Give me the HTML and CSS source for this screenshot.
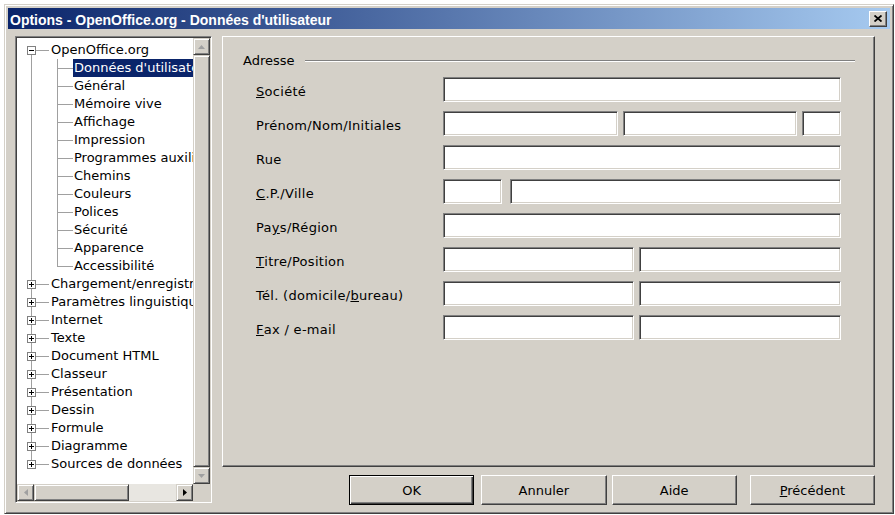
FILE: index.html
```html
<!DOCTYPE html>
<html>
<head>
<meta http-equiv="Content-Type" content="text/html;charset=utf-8">
<title>Options - OpenOffice.org - Données d'utilisateur</title>
<link rel="stylesheet" href="styles.css">
</head>
<body>
<div class="window">
  <div class="titlebar">
    <span class="caption">Options - OpenOffice.org - Données d'utilisateur</span>
    <span class="close"><svg width="8" height="7" viewBox="0 0 8 7"><path d="M0.5 0.5 L7.5 6.5 M7.5 0.5 L0.5 6.5" stroke="#000" stroke-width="1.8"/></svg></span>
  </div>

  <div class="client">
    <div class="tree">
      <div class="viewport">
        <div class="node root"><span class="gutter"><span class="box minus"></span></span><span class="label">OpenOffice.org</span></div>
        <div class="node child"><span class="gutter"></span><span class="label selected">Données d'utilisateur</span></div>
        <div class="node child"><span class="gutter"></span><span class="label">Général</span></div>
        <div class="node child"><span class="gutter"></span><span class="label">Mémoire vive</span></div>
        <div class="node child"><span class="gutter"></span><span class="label">Affichage</span></div>
        <div class="node child"><span class="gutter"></span><span class="label">Impression</span></div>
        <div class="node child"><span class="gutter"></span><span class="label">Programmes auxiliaires</span></div>
        <div class="node child"><span class="gutter"></span><span class="label">Chemins</span></div>
        <div class="node child"><span class="gutter"></span><span class="label">Couleurs</span></div>
        <div class="node child"><span class="gutter"></span><span class="label">Polices</span></div>
        <div class="node child"><span class="gutter"></span><span class="label">Sécurité</span></div>
        <div class="node child"><span class="gutter"></span><span class="label">Apparence</span></div>
        <div class="node child last"><span class="gutter"></span><span class="label">Accessibilité</span></div>
        <div class="node top"><span class="gutter"><span class="box plus"></span></span><span class="label">Chargement/enregistrement</span></div>
        <div class="node top"><span class="gutter"><span class="box plus"></span></span><span class="label">Paramètres linguistiques</span></div>
        <div class="node top"><span class="gutter"><span class="box plus"></span></span><span class="label">Internet</span></div>
        <div class="node top"><span class="gutter"><span class="box plus"></span></span><span class="label">Texte</span></div>
        <div class="node top"><span class="gutter"><span class="box plus"></span></span><span class="label">Document HTML</span></div>
        <div class="node top"><span class="gutter"><span class="box plus"></span></span><span class="label">Classeur</span></div>
        <div class="node top"><span class="gutter"><span class="box plus"></span></span><span class="label">Présentation</span></div>
        <div class="node top"><span class="gutter"><span class="box plus"></span></span><span class="label">Dessin</span></div>
        <div class="node top"><span class="gutter"><span class="box plus"></span></span><span class="label">Formule</span></div>
        <div class="node top"><span class="gutter"><span class="box plus"></span></span><span class="label">Diagramme</span></div>
        <div class="node top last"><span class="gutter"><span class="box plus"></span></span><span class="label">Sources de données</span></div>
      </div>

      <div class="vscroll">
        <span class="sbtn"><svg width="7" height="4" viewBox="0 0 7 4"><polygon points="3.5,0 7,4 0,4" fill="#a0a0a0"/></svg></span>
        <span class="thumb"></span>
        <span class="sbtn"><svg width="7" height="4" viewBox="0 0 7 4"><polygon points="0,0 7,0 3.5,4" fill="#a0a0a0"/></svg></span>
      </div>
      <div class="hscroll">
        <span class="sbtn"><svg width="4" height="7" viewBox="0 0 4 7"><polygon points="4,0 4,7 0,3.5" fill="#a0a0a0"/></svg></span>
        <span class="thumb hthumb"></span>
        <span class="track"></span>
        <span class="sbtn"><svg width="4" height="7" viewBox="0 0 4 7"><polygon points="0,0 4,3.5 0,7" fill="#000"/></svg></span>
      </div>
      <div class="corner"></div>
    </div>

    <div class="page">
      <div class="group-head"><span>Adresse</span><span class="rule"></span></div>
      <div class="form">
        <label><u>S</u>ociété</label>
        <div class="fields"><span class="field"></span></div>

        <label>Prénom/Nom/Initiales</label>
        <div class="fields"><span class="field w175"></span><span class="field w174"></span><span class="field"></span></div>

        <label>Rue</label>
        <div class="fields"><span class="field"></span></div>

        <label><u>C</u>.P./Ville</label>
        <div class="fields wide-gap"><span class="field w59"></span><span class="field"></span></div>

        <label>Pa<u>y</u>s/Région</label>
        <div class="fields"><span class="field"></span></div>

        <label><u>T</u>itre/Position</label>
        <div class="fields"><span class="field w191"></span><span class="field"></span></div>

        <label>Tél. (domicile/<u>b</u>ureau)</label>
        <div class="fields"><span class="field w191"></span><span class="field"></span></div>

        <label><u>F</u>ax / e-mail</label>
        <div class="fields"><span class="field w191"></span><span class="field"></span></div>
      </div>
    </div>

    <div class="buttons">
      <span class="button default">OK</span>
      <span class="button">Annuler</span>
      <span class="button">Aide</span>
      <span class="button"><span><u>P</u>récédent</span></span>
    </div>
  </div>
</div>
</body>
</html>
```

FILE: styles.css
```css
* {
    box-sizing: border-box;
}

body {
    margin: 0;
    background: #fff;
    font-family: "DejaVu Sans", sans-serif;
    font-size: 13px;
    color: #000;
}

.window {
    width: 890px;
    height: 510px;
    margin: 4px 0 0 4px;
    padding: 3px;
    background: #d4d0c8;
    border: 1px solid;
    border-color: #d4d0c8 #404040 #404040 #d4d0c8;
    box-shadow: inset 1px 1px 0 #fff, inset -1px -1px 0 #808080;
}

.titlebar {
    height: 21px;
    display: flex;
    align-items: center;
    justify-content: space-between;
    padding-left: 2px;
    background: linear-gradient(to right, #0a246a, #a6caf0);
    color: #fff;
    font: bold 14px "Liberation Sans", sans-serif;
}

.caption {
    padding-top: 2px;
}

.close {
    width: 18px;
    height: 16px;
    margin-right: 3px;
    display: flex;
    align-items: center;
    justify-content: center;
    background: #d4d0c8;
    border: 1px solid;
    border-color: #fff #404040 #404040 #fff;
    box-shadow: inset -1px -1px 0 #808080;
}

.client {
    display: grid;
    grid-template-columns: 197px 653px;
    grid-template-rows: 431px auto;
    column-gap: 10px;
    padding: 7px 0 0 7px;
}

/* tree */

.tree {
    grid-row: 1 / 3;
    height: 467px;
    padding: 1px;
    background: #fff;
    border: 1px solid;
    border-color: #808080 #fff #fff #808080;
    box-shadow: inset 1px 1px 0 #404040, inset -1px -1px 0 #d4d0c8;
    display: grid;
    grid-template-columns: 1fr 17px;
    grid-template-rows: 1fr 17px;
}

.viewport {
    overflow: hidden;
    padding-top: 3px;
    background: #fff;
}

.node {
    display: flex;
    height: 18px;
    line-height: 18px;
    white-space: nowrap;
}

.gutter {
    flex: none;
    display: flex;
    align-items: center;
    height: 18px;
    background-repeat: no-repeat;
}

.root .gutter,
.top .gutter {
    width: 33px;
    background-image: linear-gradient(#a0a0a0, #a0a0a0), linear-gradient(#a0a0a0, #a0a0a0);
    background-size: 1px 18px, 13px 1px;
    background-position: 14px 0, 19px 9px;
}

.root .gutter {
    background-size: 1px 9px, 13px 1px;
    background-position: 14px 9px, 19px 9px;
}

.top.last .gutter {
    background-size: 1px 10px, 13px 1px;
}

.child .gutter {
    width: 56px;
    background-image: linear-gradient(#a0a0a0, #a0a0a0), linear-gradient(#a0a0a0, #a0a0a0), linear-gradient(#a0a0a0, #a0a0a0);
    background-size: 1px 18px, 1px 18px, 16px 1px;
    background-position: 14px 0, 40px 0, 40px 9px;
}

.child.last .gutter {
    background-size: 1px 18px, 1px 10px, 16px 1px;
}

.box {
    width: 9px;
    height: 9px;
    margin-left: 10px;
    border: 1px solid #808080;
    background-color: #fff;
    background-repeat: no-repeat;
    background-image: linear-gradient(#000, #000);
    background-size: 5px 1px;
    background-position: 1px 3px;
}

.box.plus {
    background-image: linear-gradient(#000, #000), linear-gradient(#000, #000);
    background-size: 5px 1px, 1px 5px;
    background-position: 1px 3px, 3px 1px;
}

.label {
    flex: none;
    padding: 0 1px;
}

.label.selected {
    background: #0a246a;
    color: #fff;
}

/* scrollbars */

.vscroll,
.hscroll {
    display: flex;
    background: #e8e6e1;
}

.vscroll {
    flex-direction: column;
}

.sbtn,
.thumb {
    flex: none;
    width: 17px;
    height: 17px;
    display: flex;
    align-items: center;
    justify-content: center;
    background: #d4d0c8;
    border: 1px solid;
    border-color: #d4d0c8 #404040 #404040 #d4d0c8;
    box-shadow: inset 1px 1px 0 #fff, inset -1px -1px 0 #808080;
}

.vscroll .thumb {
    flex: 1;
    height: auto;
}

.hthumb {
    width: 95px;
}

.track {
    flex: 1;
}

.corner {
    background: #d4d0c8;
}

/* page */

.page {
    padding: 16px 19px 0 20px;
    border: 1px solid;
    border-color: #fff #404040 #404040 #fff;
    box-shadow: inset -1px -1px 0 #808080;
}

.group-head {
    display: flex;
    align-items: center;
    line-height: 16px;
}

.rule {
    flex: 1;
    height: 2px;
    margin-left: 10px;
    border-top: 1px solid #808080;
    border-bottom: 1px solid #fff;
}

.form {
    display: grid;
    grid-template-columns: 187px 1fr;
    grid-auto-rows: 25px;
    row-gap: 9px;
    margin: 8px 14px 0 13px;
}

.form label {
    display: flex;
    align-items: center;
    padding-top: 4px;
    letter-spacing: 0.3px;
}

.fields {
    display: flex;
    gap: 5px;
}

.wide-gap {
    gap: 8px;
}

.field {
    flex: 1;
    height: 25px;
    background: #fff;
    border: 1px solid;
    border-color: #808080 #fff #fff #808080;
    box-shadow: inset 1px 1px 0 #404040, inset -1px -1px 0 #d4d0c8;
}

.w175 { flex: none; width: 175px; }
.w174 { flex: none; width: 174px; }
.w59 { flex: none; width: 59px; }
.w191 { flex: none; width: 191px; }

/* buttons */

.buttons {
    display: flex;
    height: 30px;
    margin-top: 8px;
    padding-left: 127px;
}

.button {
    width: 126px;
    height: 30px;
    display: flex;
    align-items: center;
    justify-content: center;
    background: #d4d0c8;
    border: 1px solid;
    border-color: #fff #404040 #404040 #fff;
    box-shadow: inset -1px -1px 0 #808080;
}

.button.default {
    border-color: #000;
    box-shadow: inset 1px 1px 0 #fff, inset -1px -1px 0 #404040, inset -2px -2px 0 #808080;
}

.button + .button {
    margin-left: 7px;
}

.button:nth-child(3) {
    margin-left: 5px;
}

.button:nth-child(4) {
    margin-left: 13px;
}
```
